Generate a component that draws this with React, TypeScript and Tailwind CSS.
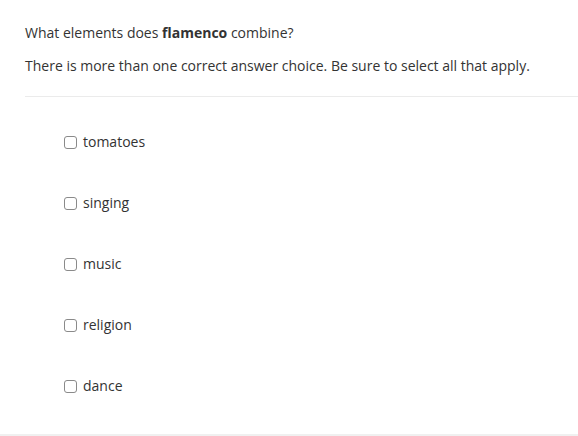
export default function App() {
  const options = ['tomatoes', 'singing', 'music', 'religion', 'dance']

  return (
    <div className="w-[578px] h-[436px] bg-white flex flex-col font-['Open_Sans',sans-serif] text-[14px] text-[#333333] overflow-hidden">
      {/* Prompt */}
      <div className="pl-[25px] pt-[23px]">
        <p className="leading-[20px]">
          What elements does <strong className="font-bold">flamenco</strong> combine?
        </p>
        <p className="leading-[20px] mt-[13px]">
          There is more than one correct answer choice. Be sure to select all that apply.
        </p>
      </div>
      <div className="ml-[25px] mt-[20px] h-px bg-[#ebebeb]" />

      {/* Choices */}
      <div className="flex flex-col pl-[64px] pt-[35px] gap-[41px] flex-1">
        {options.map((opt) => (
          <label key={opt} className="flex items-center h-[20px] cursor-pointer">
            <span className="w-[13px] h-[13px] border border-[#8a8a8a] rounded-[3px] bg-white mr-[6px]" />
            <span className="leading-[20px]">{opt}</span>
          </label>
        ))}
      </div>

      <div className="h-[2px] bg-[#f0f0f0]" />
    </div>
  )
}
